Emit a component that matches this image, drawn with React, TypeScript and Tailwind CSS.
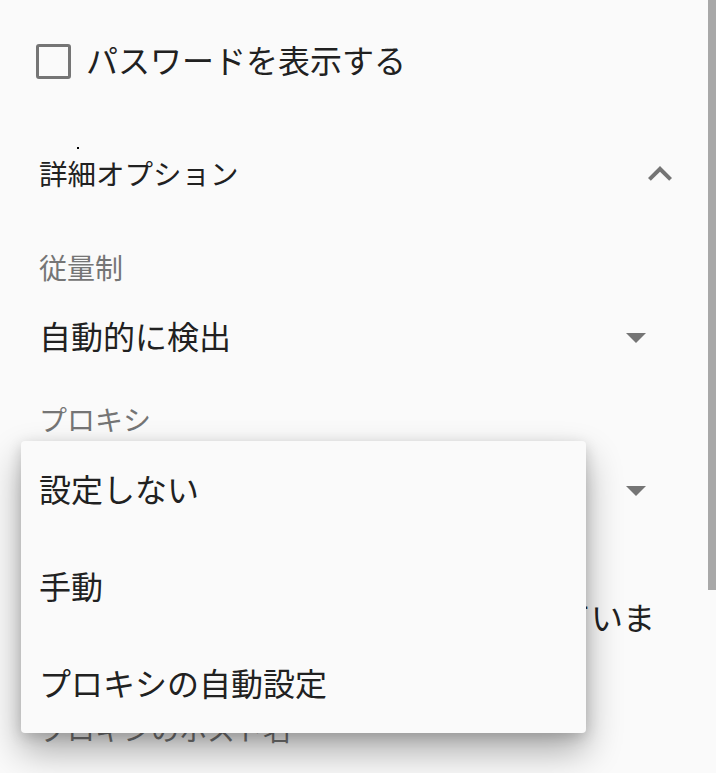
import React from 'react';

const FONT = "font-['Noto_Sans_CJK_JP','Noto_Sans',sans-serif]";

const ArrowDropDown = () => (
  <svg width="48" height="48" viewBox="0 0 24 24" className="shrink-0">
    <path d="M7 10l5 5 5-5z" fill="#757575" />
  </svg>
);

const ExpandLess = () => (
  <svg width="48" height="48" viewBox="0 0 24 24" className="shrink-0">
    <path d="M12 8l-6 6 1.41 1.41L12 10.83l4.59 4.58L18 14z" fill="#757575" />
  </svg>
);

const proxyOptions = ['設定しない', '手動', 'プロキシの自動設定'];

export default function App() {
  return (
    <div className={`relative w-[716px] h-[773px] overflow-hidden bg-[#fafafa] ${FONT}`}>
      {/* form body */}
      <div className="flex flex-col">
        {/* show password */}
        <div className="h-[122px] flex items-center pl-[36px] gap-[15px]">
          <div className="w-[35px] h-[35px] border-[3px] border-[#757575] rounded-[3px]" />
          <span className="text-[32px] leading-none text-[#212121] pb-[4px]">パスワードを表示する</span>
        </div>

        {/* advanced options */}
        <div className="h-[104px] flex items-center justify-between pl-[39px] pr-[32px]">
          <span className="text-[28.5px] leading-none text-[#212121] pb-[2px]">詳細オプション</span>
          <ExpandLess />
        </div>

        {/* metered */}
        <div className="h-[84px] flex items-center pl-[39px]">
          <span className="text-[28px] leading-none text-[#757575] pb-[2px]">従量制</span>
        </div>
        <div className="h-[54px] flex items-center justify-between pl-[39px] pr-[56px]">
          <span className="text-[32px] leading-none text-[#212121] pb-[5px]">自動的に検出</span>
          <ArrowDropDown />
        </div>

        {/* proxy */}
        <div className="h-[112px] flex items-center pl-[39px]">
          <span className="text-[28px] leading-none text-[#757575] pb-[2px]">プロキシ</span>
        </div>
        <div className="h-[28px] flex items-center justify-between pl-[39px] pr-[56px]">
          <span className="text-[32px] leading-none text-[#212121]">設定しない</span>
          <ArrowDropDown />
        </div>

        <div className="h-[86px]" />
        <div className="h-[54px] flex items-center justify-end pr-[61px]">
          <span className="text-[32px] leading-none text-[#212121] whitespace-nowrap pb-[2px]">使用していま</span>
        </div>

        <div className="h-[58px]" />
        <div className="h-[54px] flex items-center pl-[39px]">
          <span className="text-[28px] leading-none text-[#757575]">プロキシのホスト名</span>
        </div>
      </div>

      {/* stray pixel */}
      <div className="absolute left-[77px] top-[147px] w-[2px] h-[2px] bg-black" />

      {/* scrollbar */}
      <div className="absolute right-0 top-0 w-[8px] h-[590px] bg-[#a8a8a8]" />

      {/* proxy dropdown menu */}
      <div className="absolute left-[21px] top-[441px] w-[565px] h-[292px] bg-[#fafafa] rounded-[4px] flex flex-col shadow-[0_18px_36px_rgba(0,0,0,0.32),0_4px_14px_rgba(0,0,0,0.16)]">
        {proxyOptions.map(opt => (
          <div key={opt} className="flex-1 flex items-center pl-[18px]">
            <span className="text-[32px] leading-none text-[#212121] pb-[4px]">{opt}</span>
          </div>
        ))}
      </div>
    </div>
  );
}
